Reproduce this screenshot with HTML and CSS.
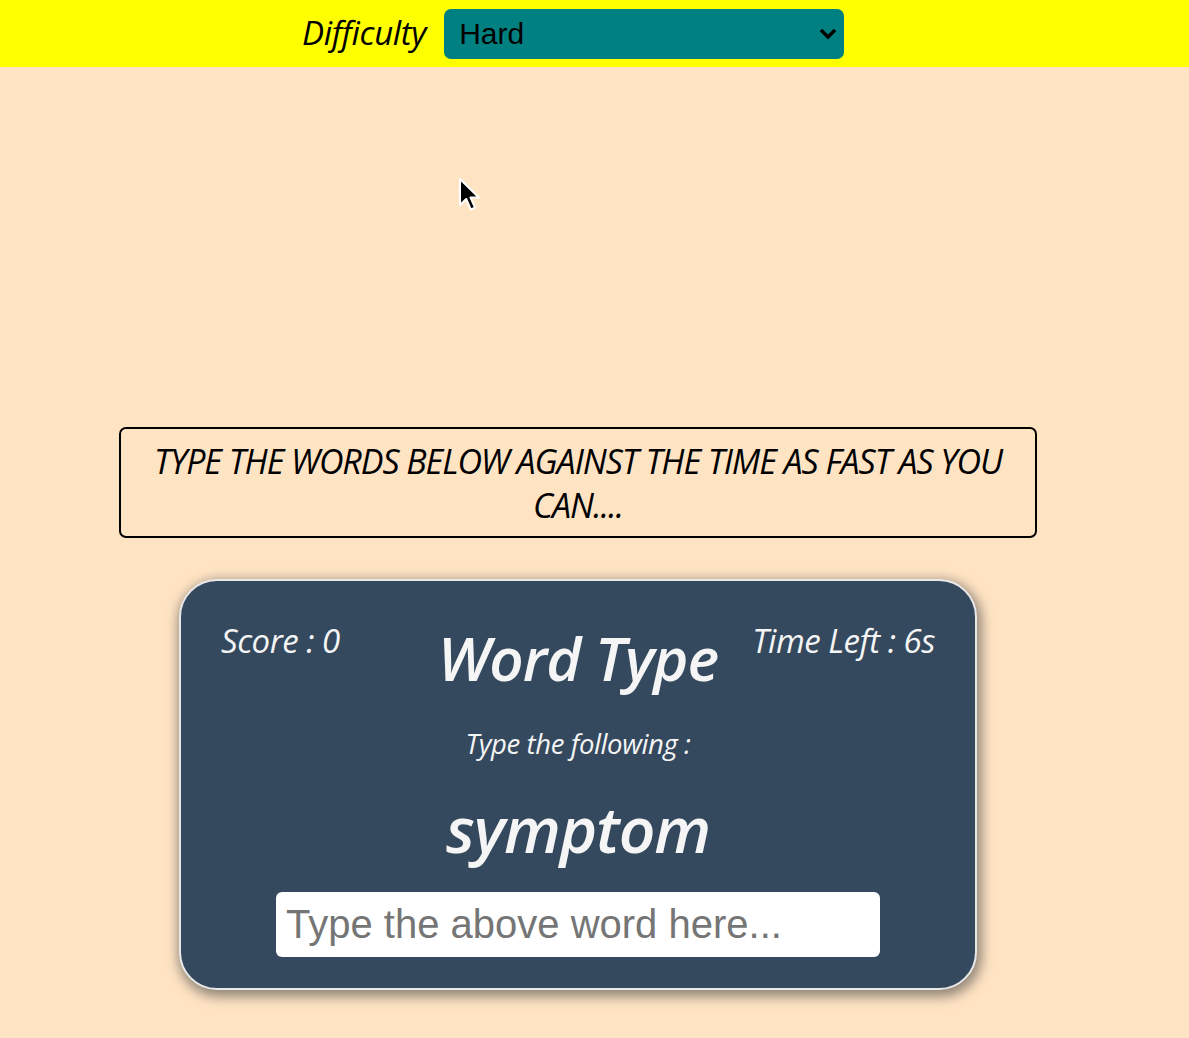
FILE: index.html
```html
<!DOCTYPE html>
<html lang="en">
<head>
<meta charset="utf-8">
<title>Word Type</title>
<link rel="stylesheet" href="styles.css">
</head>
<body>
<header class="topbar">
  <label class="diff-label" for="difficulty">Difficulty</label>
  <div class="select-wrap">
    <select id="difficulty" class="diff-select">
      <option>Easy</option>
      <option>Medium</option>
      <option selected>Hard</option>
    </select>
    <svg class="chev" width="20" height="14" viewBox="0 0 20 14"><path d="M3 3 L10 10 L17 3" fill="none" stroke="#000" stroke-width="3.4"/></svg>
  </div>
</header>
<main class="main">
  <div class="banner">TYPE THE WORDS BELOW AGAINST THE TIME AS FAST AS YOU CAN....</div>
  <section class="card">
    <div class="card-head">
      <div class="stat stat-left">Score : 0</div>
      <h1 class="title">Word Type</h1>
      <div class="stat stat-right">Time Left : 6s</div>
    </div>
    <p class="prompt">Type the following :</p>
    <p class="word">symptom</p>
    <input class="answer" type="text" placeholder="Type the above word here...">
  </section>
</main>
<svg class="cursor" width="28" height="38" viewBox="0 0 28 38"><path d="M2 2 L2 28 L8.2 22 L12.8 32.5 L17 30.6 L12.5 20.5 L20.8 20.5 Z" fill="#000" stroke="#fff" stroke-width="2" stroke-linejoin="round"/></svg>
</body>
</html>
```
FILE: styles.css
```css
html, body {
  margin: 0;
  padding: 0;
}
body {
  background: #ffe4c4;
  font-family: "Open Sans", sans-serif;
  min-height: 1038px;
  position: relative;
}
.topbar {
  background: #ffff00;
  height: 67px;
  display: flex;
  align-items: center;
  padding-left: 302px;
  gap: 18px;
  box-sizing: border-box;
}
.diff-label {
  font-style: italic;
  font-size: 33px;
  color: #000;
  letter-spacing: -0.35px;
  margin-top: -2px;
}
.select-wrap {
  position: relative;
  width: 400px;
  height: 50px;
}
.diff-select {
  appearance: none;
  -webkit-appearance: none;
  width: 100%;
  height: 100%;
  background: #008080;
  border: none;
  border-radius: 7px;
  font-family: "Liberation Sans", Arial, sans-serif;
  font-size: 30px;
  color: #000;
  padding: 0 0 0 15px;
  margin: 0;
  outline: none;
}
.chev {
  position: absolute;
  right: 6px;
  top: 18px;
  pointer-events: none;
}
.main {
  padding-top: 360px;
  display: flex;
  flex-direction: column;
  align-items: flex-start;
}
.banner {
  margin-left: 119px;
  width: 918px;
  height: 111px;
  box-sizing: border-box;
  border: 2px solid #000;
  border-radius: 7px;
  padding: 10px 30px 0;
  text-align: center;
  font-style: italic;
  font-size: 34px;
  line-height: 44px;
  color: #000;
  letter-spacing: -1.05px;
}
.card {
  margin-left: 179px;
  margin-top: 41px;
  width: 798px;
  height: 411px;
  box-sizing: border-box;
  background: #34495e;
  border: 2px solid #e8e8e8;
  border-radius: 38px;
  box-shadow: 2px 4px 12px 3px rgba(60, 60, 60, 0.55);
  color: #f5f5f5;
  display: flex;
  flex-direction: column;
  align-items: center;
  padding: 36px 40px 0;
}
.card-head {
  align-self: stretch;
  display: grid;
  grid-template-columns: 1fr auto 1fr;
  align-items: start;
}
.stat {
  font-style: italic;
  font-size: 33px;
  line-height: 46px;
  margin-top: 1px;
  letter-spacing: -0.5px;
}
.stat-left {
  justify-self: start;
}
.stat-right {
  justify-self: end;
}
.title {
  margin: 0;
  font-style: italic;
  font-weight: 600;
  font-size: 60px;
  line-height: 82px;
  letter-spacing: -1px;
}
.prompt {
  margin: 26px 0 0;
  font-style: italic;
  font-size: 27.5px;
  line-height: 38px;
  letter-spacing: -0.4px;
}
.word {
  margin: 24px 0 0;
  font-style: italic;
  font-weight: 600;
  font-size: 64px;
  line-height: 84px;
  letter-spacing: -1.15px;
}
.answer {
  margin-top: 21px;
  width: 604px;
  height: 65px;
  box-sizing: border-box;
  border: none;
  border-radius: 6px;
  background: #fff;
  padding: 0 10px;
  font-family: "Liberation Sans", Arial, sans-serif;
  font-size: 40px;
  outline: none;
}
.answer::placeholder {
  color: #757575;
}
.cursor {
  position: absolute;
  left: 458px;
  top: 177px;
}
```
